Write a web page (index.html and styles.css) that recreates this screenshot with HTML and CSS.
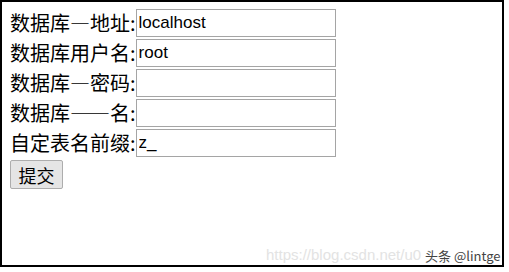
FILE: index.html
```html
<!DOCTYPE html>
<html lang="zh">
<head>
<meta charset="utf-8">
<title>配置</title>
<link rel="stylesheet" href="styles.css">
</head>
<body>
<div class="frame">
  <form class="form">
    <div class="row"><label class="label">数据库—地址:</label><input class="field" type="text" value="localhost"></div>
    <div class="row"><label class="label">数据库用户名:</label><input class="field" type="text" value="root"></div>
    <div class="row"><label class="label">数据库—密码:</label><input class="field" type="text" value=""></div>
    <div class="row"><label class="label">数据库——名:</label><input class="field" type="text" value=""></div>
    <div class="row"><label class="label">自定表名前缀:</label><input class="field" type="text" value="z_"></div>
    <div class="row"><button class="submit" type="button">提交</button></div>
  </form>
  <div class="wm-url">https://blog.csdn.net/u0</div>
  <div class="wm-brand">头条 @lintge</div>
</div>
</body>
</html>
```
FILE: styles.css
```css
html, body {
  margin: 0;
  padding: 0;
  background: #ffffff;
}
.frame {
  position: relative;
  width: 500px;
  height: 263px;
  border: 2px solid #000;
  box-sizing: content-box;
  overflow: hidden;
  font-family: "Noto Sans CJK SC", "Liberation Sans", sans-serif;
}
.form {
  display: flex;
  flex-direction: column;
  padding: 6px 8px 0 8px;
  margin: 0;
}
.row {
  display: flex;
  align-items: center;
  height: 30px;
}
.label {
  font-size: 20px;
  color: #000;
  line-height: 30px;
  white-space: nowrap;
}
.field {
  width: 200px;
  height: 28px;
  box-sizing: border-box;
  border: 1px solid #a5a5a5;
  padding: 0 2px;
  margin: 0;
  font-family: "Liberation Sans", Arial, sans-serif;
  font-size: 17px;
  color: #000;
  background: #fff;
  outline: none;
}
.submit {
  margin-top: 3px;
  height: 29px;
  width: 53px;
  padding: 0;
  border: 1px solid #adadad;
  border-radius: 2px;
  background: #e5e5e5;
  font-family: "Noto Sans CJK SC", sans-serif;
  font-size: 18px;
  color: #000;
}
.wm-url {
  position: absolute;
  left: 264px;
  top: 244px;
  font-family: "Liberation Sans", Arial, sans-serif;
  font-size: 15px;
  color: #e3e3e3;
  white-space: nowrap;
}
.wm-brand {
  position: absolute;
  left: 421px;
  top: 245px;
  padding: 0 2px;
  font-family: "Noto Sans CJK SC", "Liberation Sans", sans-serif;
  font-size: 13px;
  color: #444;
  white-space: nowrap;
  line-height: 18px;
}
```
